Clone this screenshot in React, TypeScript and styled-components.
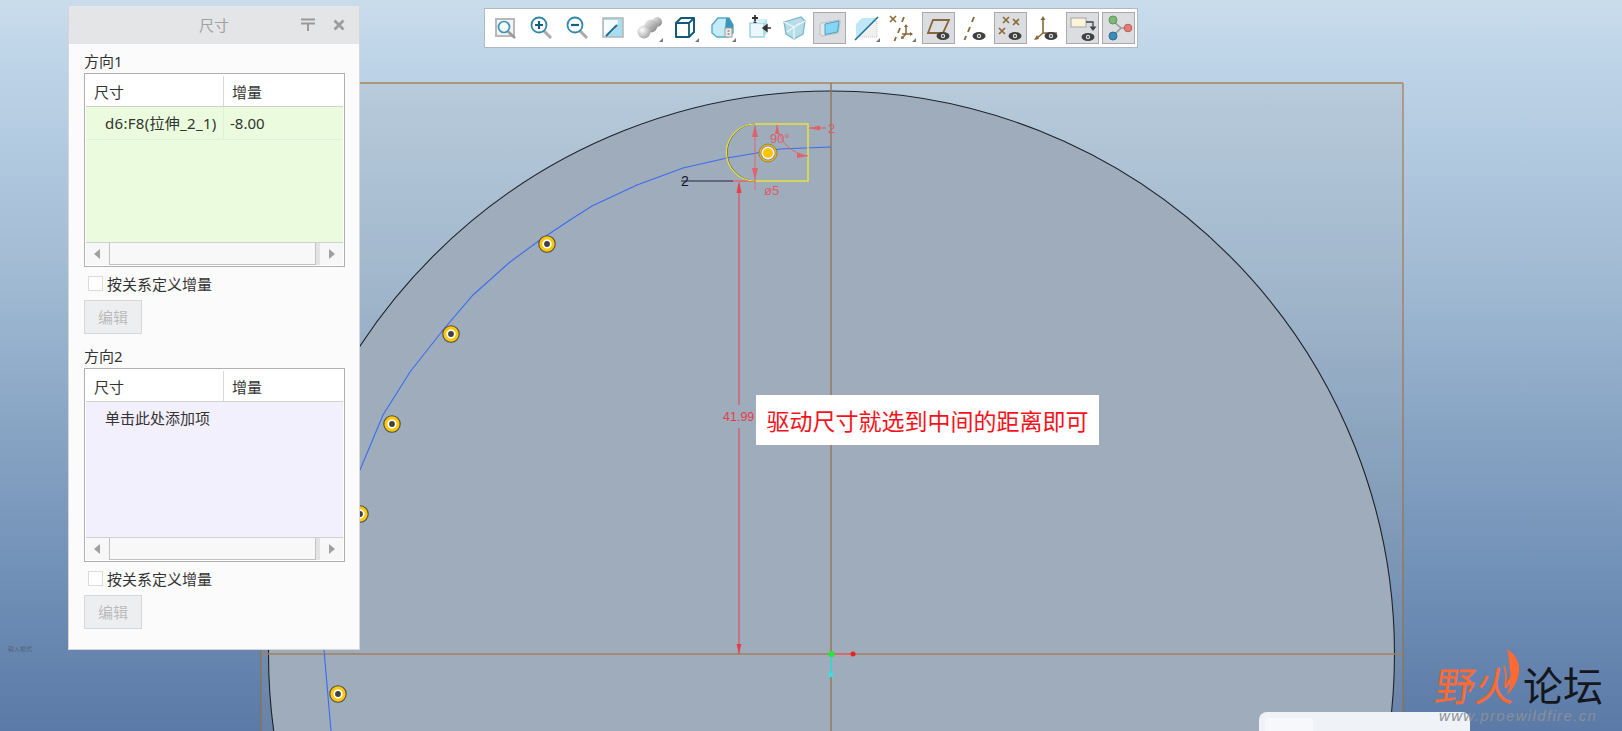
import React from "react";
import styled, { createGlobalStyle } from "styled-components";

const Global = createGlobalStyle`
  html, body { margin: 0; padding: 0; width: 1622px; height: 731px; overflow: hidden; }
  body { font-family: "Noto Sans", "Noto Sans CJK SC", sans-serif; }
`;

const Stage = styled.div`
  position: relative;
  width: 1622px;
  height: 731px;
  overflow: hidden;
  background: linear-gradient(180deg, #c8dcec 0%, #bcd3e7 10%, #a4bdd5 35%, #86a3c3 60%, #6a8ab3 85%, #5b7aa7 100%);
`;

const Drawing = styled.svg`
  position: absolute;
  left: 0;
  top: 0;
`;

const DimText = styled.text<{ $c?: string; $s?: number }>`
  font-family: "Liberation Sans", "Noto Sans CJK SC", sans-serif;
  font-size: ${(p) => p.$s ?? 12}px;
  fill: ${(p) => p.$c ?? "#d9606a"};
`;

const ModeHint = styled.div`
  position: absolute;
  left: 8px;
  top: 645px;
  font-size: 6px;
  line-height: 8px;
  color: #565f70;
  font-family: "Noto Sans CJK SC", sans-serif;
`;

/* ---------- toolbar ---------- */
const Toolbar = styled.div`
  position: absolute;
  left: 484px;
  top: 8px;
  width: 654px;
  height: 40px;
  box-sizing: border-box;
  background: #fff;
  border: 1px solid #aebbc6;
  padding: 0 0 0 3.5px;
  display: flex;
  align-items: center;
  gap: 3.1px;
`;

const ToolButton = styled.div<{ $on?: boolean }>`
  width: 33px;
  height: 32px;
  box-sizing: border-box;
  display: flex;
  align-items: center;
  justify-content: center;
  background: ${(p) => (p.$on ? "#dcdde0" : "transparent")};
  border: 1px solid ${(p) => (p.$on ? "#aaaaaa" : "transparent")};
`;

const Corner = () => <polygon points="29,29 29,25 25,29" fill="#777" />;
const Eye = ({ x, y }: { x: number; y: number }) => (
  <g>
    <ellipse cx={x} cy={y} rx="6.5" ry="4" fill="#3f3f3f" />
    <circle cx={x} cy={y} r="2.2" fill="#ddd" />
    <circle cx={x} cy={y} r="1" fill="#333" />
  </g>
);
const Cross = ({ x, y }: { x: number; y: number }) => (
  <path d={`M${x - 3} ${y - 3}L${x + 3} ${y + 3}M${x + 3} ${y - 3}L${x - 3} ${y + 3}`} stroke="#8a6a35" strokeWidth="1.6" fill="none" />
);
const BROWN = "#86683a";

const icons: React.ReactNode[] = [
  <g key="1">
    <rect x="6" y="6" width="18" height="17" fill="#eef4f7" stroke="#b8b8b8" strokeWidth="2" />
    <circle cx="14" cy="14" r="5.5" fill="#f6fbfd" stroke="#3f93b3" strokeWidth="1.7" />
    <path d="M18 18.5L25 25" stroke="#9a9a9a" strokeWidth="2.6" />
  </g>,
  <g key="2">
    <path d="M18 18L25 25" stroke="#aaa" strokeWidth="3" />
    <circle cx="13" cy="12" r="7.5" fill="#fff" stroke="#2f88a7" strokeWidth="1.8" />
    <path d="M9 12H17M13 8V16" stroke="#14607e" strokeWidth="2.2" />
  </g>,
  <g key="3">
    <path d="M18 18L25 25" stroke="#aaa" strokeWidth="3" />
    <circle cx="13" cy="12" r="7.5" fill="#fff" stroke="#2f88a7" strokeWidth="1.8" />
    <path d="M9 12H17" stroke="#14607e" strokeWidth="2.2" />
  </g>,
  <g key="4">
    <rect x="5" y="5" width="20" height="19" fill="#a9dcee" stroke="#b5b5b5" strokeWidth="1.5" />
    <path d="M6 7H20C20 15 14 21 6 23Z" fill="#f7fbfc" />
    <path d="M8 23L19 12" stroke="#1c6f96" strokeWidth="2" />
  </g>,
  <g key="5">
    <defs>
      <radialGradient id="sph" cx="0.35" cy="0.35" r="0.8">
        <stop offset="0" stopColor="#ffffff" />
        <stop offset="1" stopColor="#9a9a9a" />
      </radialGradient>
      <linearGradient id="sph2" x1="0" y1="0" x2="1" y2="1">
        <stop offset="0" stopColor="#f4f4f4" />
        <stop offset="1" stopColor="#7d7d7d" />
      </linearGradient>
    </defs>
    <circle cx="23" cy="9" r="5" fill="url(#sph2)" />
    <circle cx="17" cy="13" r="6.5" fill="url(#sph2)" />
    <circle cx="10" cy="19" r="6.5" fill="url(#sph)" />
    <Corner />
  </g>,
  <g key="6">
    <path d="M6 10L11 5H24V19L19 24H6Z" fill="#fff" stroke="#14597a" strokeWidth="2" strokeLinejoin="round" />
    <path d="M6 10H19V24M19 10L24 5" fill="none" stroke="#14597a" strokeWidth="1.8" />
    <Corner />
  </g>,
  <g key="7">
    <path d="M5 12L11 5H22L26 12V20L21 24H10L5 20Z" fill="#c4ebf7" stroke="#5ba8c5" strokeWidth="1.4" />
    <path d="M19 5L22 5L26 12V16H18Z" fill="#3f94bb" />
    <rect x="18" y="15" width="7" height="9" fill="#ececec" stroke="#999" />
    <path d="M20.5 18H22.5M20.5 21H22.5" stroke="#555" strokeWidth="1.2" />
    <Corner />
  </g>,
  <g key="8">
    <rect x="7" y="10" width="14" height="14" fill="#eaf8fc" stroke="#9bd0e2" strokeWidth="1.4" />
    <path d="M7 10L11 6H24L21 10Z" fill="#d6f0f8" />
    <path d="M21 10L24 6V20L21 24Z" fill="#a9def0" />
    <path d="M15 5H9M12 2V8" stroke="#333" strokeWidth="1.8" />
    <path d="M12 8L10 10H14Z" fill="#333" />
    <path d="M28 15H23M20 15L24 12V18Z" stroke="#333" strokeWidth="1.4" fill="#333" />
  </g>,
  <g key="9">
    <path d="M5 9L22 4L26 8L24 21L15 26L7 21Z" fill="#b7dde9" stroke="#7fb6c9" strokeWidth="1.3" />
    <path d="M5 9L15 14L26 8M15 14V26M8 19L21 10" fill="none" stroke="#eef8fb" strokeWidth="1.2" />
  </g>,
  <g key="10">
    <path d="M7 10L24 7C25.5 7 25 9 25 10L23 20L8 23C6 23 5 22 5 20V12C5 11 6 10 7 10Z" fill="#e4e7e9" stroke="#b9bdc1" strokeWidth="1" />
    <path d="M10 11L24 8L22.5 19L10 21.5Z" fill="#85d6f2" stroke="#3f9cc2" strokeWidth="0.9" />
  </g>,
  <g key="11">
    <path d="M8 8H26V24H8Z" fill="#f0f0f0" stroke="#c9c9c9" strokeDasharray="1 1" />
    <path d="M5 11L11 5H25L5 25Z" fill="#bfe8f6" />
    <path d="M4 27L27 4" stroke="#1c6f96" strokeWidth="1.600" />
    <Corner />
  </g>,
  <g key="12">
    <Cross x={6} y={6} />
    <path d="M17 4L15 9M13 15L11 20M9 24L7.500 28" stroke={BROWN} strokeWidth="1.8" />
    <path d="M19 13V21H15M19 21H25M19 21L15 25" stroke={BROWN} strokeWidth="1.5" fill="none" />
    <path d="M19 11L17 14H21ZM26 21L23 19V23ZM14 26L14.500 22.500L17.500 25.500Z" fill={BROWN} />
    <Corner />
  </g>,
  <g key="13">
    <path d="M10 7H26L20 20H5Z" fill="none" stroke={BROWN} strokeWidth="1.8" />
    <Eye x={20} y={23} />
  </g>,
  <g key="14">
    <path d="M15 4L13 9M11 14L9 19M7 23L5.500 27" stroke={BROWN} strokeWidth="1.9" />
    <Eye x={20} y={23} />
  </g>,
  <g key="15">
    <Cross x={11} y={7} />
    <Cross x={21} y={9} />
    <Cross x={7} y={18} />
    <Eye x={20} y={23} />
  </g>,
  <g key="16">
    <path d="M12 5V20H26M12 20L5 26" stroke={BROWN} strokeWidth="1.6" fill="none" />
    <path d="M12 3L9.500 7H14.500ZM6 22L3 27L8 26Z" fill={BROWN} />
    <Eye x={20} y={23} />
  </g>,
  <g key="17">
    <rect x="3" y="5" width="15" height="9" fill="#fbf4d9" stroke="#a5a5a5" />
    <path d="M18 9H25V14" stroke="#444" strokeWidth="1.3" fill="none" />
    <path d="M21.500 13.500H28.500L25 18Z" fill="#444" />
    <Eye x={20} y={24} />
  </g>,
  <g key="18">
    <path d="M9 8L17 15L9 23M17 15H24" stroke="#9a9a9a" strokeWidth="1.6" fill="none" />
    <circle cx="9" cy="7" r="4" fill="#7fb679" stroke="#5d9658" />
    <circle cx="9" cy="23" r="4" fill="#3d8cb8" stroke="#2d7099" />
    <circle cx="24" cy="15" r="3.8" fill="#e57b74" stroke="#bd5a54" />
  </g>,
];
const activeTools = new Set([9, 12, 14, 16, 17]);

const ToolIcon = styled.svg`
  width: 30px;
  height: 30px;
  display: block;
  flex: none;
`;

/* ---------- dialog ---------- */
const Dialog = styled.div`
  position: absolute;
  left: 68px;
  top: 6px;
  width: 292px;
  height: 644px;
  box-sizing: border-box;
  background: #fbfbfb;
  border: 1px solid #d4d6d8;
  border-top: none;
  color: #333;
  font-size: 15px;
`;

const TitleBar = styled.div`
  height: 38px;
  background: #e4e5e7;
  display: flex;
  align-items: center;
  justify-content: center;
  padding-bottom: 2px;
  box-sizing: border-box;
  position: relative;
  color: #a2a2a2;
`;

const TitleActions = styled.div`
  position: absolute;
  right: 14px;
  top: 12px;
  display: flex;
  align-items: center;
  gap: 17px;
`;

const Body = styled.div`
  padding: 8px 14px 0 15px;
`;

const GroupLabel = styled.div<{ $second?: boolean }>`
  height: 20px;
  line-height: 18px;
  margin-top: ${(p) => (p.$second ? "13px" : "0")};
  margin-bottom: 1px;
`;

const Table = styled.div`
  box-sizing: border-box;
  height: 194px;
  border: 1px solid #b0b0b0;
  padding: 1px;
  display: flex;
  flex-direction: column;
  background: #fff;
`;

const HeadRow = styled.div`
  height: 32px;
  flex: none;
  box-sizing: border-box;
  display: grid;
  grid-template-columns: 137px 1fr;
  border-bottom: 1px solid #d0d0d0;
`;

const HeadCell = styled.div<{ $last?: boolean }>`
  display: flex;
  align-items: center;
  padding-left: 8px;
  border-left: ${(p) => (p.$last ? "1px solid #d8d8d8" : "none")};
  margin: 1px 0 0;
`;

const TableBody = styled.div<{ $bg: string }>`
  flex: 1;
  background: ${(p) => p.$bg};
`;

const DataRow = styled.div`
  height: 33px;
  box-sizing: border-box;
  display: grid;
  grid-template-columns: 137px 1fr;
  border-bottom: 1px solid #e0efd6;
`;

const DataCell = styled.div<{ $last?: boolean }>`
  display: flex;
  align-items: center;
  padding-left: ${(p) => (p.$last ? "6px" : "19px")};
  padding-bottom: 1px;
  border-left: ${(p) => (p.$last ? "1px solid #e0efd6" : "none")};
  white-space: nowrap;
  letter-spacing: ${(p) => (p.$last ? "0" : "0.3px")};
`;

const AddHint = styled.div`
  height: 33px;
  display: flex;
  align-items: center;
  padding-left: 19px;
  padding-bottom: 2px;
  box-sizing: border-box;
`;

const ScrollBar = styled.div`
  flex: none;
  height: 23px;
  display: flex;
  background: #e4e4e4;
  gap: 0;
  border-top: 1px solid #d0d0d0;
  box-sizing: border-box;
`;

const ScrollArrow = styled.div`
  width: 23px;
  flex: none;
  display: flex;
  align-items: center;
  justify-content: center;
  background: #f7f7f7;
  color: #9a9a9a;
`;

const ScrollTrack = styled.div`
  flex: 1;
  background: #f8f8f8;
  border: 1px solid #c2c2c2;
  border-top: none;
  margin-right: 4px;
`;

const CheckRow = styled.label`
  display: flex;
  align-items: center;
  margin: 9px 0 0 4px;
  height: 15px;
  gap: 4px;
`;

const CheckBox = styled.span`
  width: 15px;
  height: 15px;
  box-sizing: border-box;
  background: #fff;
  border: 1px solid #dcdcdc;
  flex: none;
`;

const EditButton = styled.div`
  margin-top: 9px;
  width: 58px;
  height: 34px;
  box-sizing: border-box;
  display: flex;
  align-items: center;
  justify-content: center;
  padding-bottom: 2px;
  background: #edeef0;
  border: 1px solid #d8d8d8;
  color: #bbbbbb;
`;

const Triangle = ({ dir }: { dir: "l" | "r" }) => (
  <svg width="7" height="10" viewBox="0 0 7 10">
    <polygon points={dir === "l" ? "6,0 6,10 0,5" : "1,0 1,10 7,5"} fill="#a0a0a0" />
  </svg>
);

/* ---------- overlays ---------- */
const Note = styled.div`
  position: absolute;
  left: 756px;
  top: 395px;
  width: 343px;
  height: 50px;
  box-sizing: border-box;
  background: #fff;
  display: flex;
  align-items: center;
  justify-content: center;
  color: #f5131b;
  font-size: 23px;
  font-family: "Noto Sans CJK SC", sans-serif;
  white-space: nowrap;
`;

const BottomCard = styled.div`
  position: absolute;
  left: 1259px;
  top: 712px;
  width: 211px;
  height: 40px;
  background: #eff2f7;
  border-radius: 8px 8px 0 0;
  padding: 6px;
  box-sizing: border-box;
`;

const CardTab = styled.div`
  width: 48px;
  height: 30px;
  background: #f6f8fb;
  border-radius: 4px;
`;

const Watermark = styled.div`
  position: absolute;
  left: 1436px;
  top: 646px;
  width: 180px;
  height: 85px;
`;

const BrandLine = styled.div`
  display: flex;
  align-items: center;
  height: 62px;
  padding-top: 14px;
  box-sizing: border-box;
  font-size: 40px;
  line-height: 40px;
  font-family: "Noto Sans CJK SC", sans-serif;
  white-space: nowrap;
`;

const BrandHot = styled.span`
  color: #ff6a33;
  display: inline-block;
  transform: skewX(-8deg);
  width: 87px;
`;

const BrandCold = styled.span`
  color: #15171c;
`;

const BrandFlame = styled.svg`
  position: absolute;
  left: 67px;
  top: 2px;
`;

const BrandUrl = styled.div`
  margin-top: -1px;
  padding-left: 3px;
  font-family: "Liberation Sans", sans-serif;
  font-style: italic;
  font-size: 15px;
  line-height: 18px;
  letter-spacing: 1.35px;
  color: #8a8f99;
  white-space: nowrap;
`;

/* ---------- data ---------- */
const blueCurve = "324,650 331,731";
const blueTop =
  "360,470 383,415 410,372 443,330 473,295 510,262 540,240 570,220 592,206 637,185 683,168 727,158 757,153 780,149 831,147";

const holes: [number, number][] = [
  [547, 244],
  [451, 334],
  [392, 424],
  [360, 514],
  [338, 694],
];

const GroupTable = ({ children, bg }: { children?: React.ReactNode; bg: string }) => (
  <Table>
    <HeadRow>
      <HeadCell>尺寸</HeadCell>
      <HeadCell $last>增量</HeadCell>
    </HeadRow>
    <TableBody $bg={bg}>{children}</TableBody>
    <ScrollBar>
      <ScrollArrow>
        <Triangle dir="l" />
      </ScrollArrow>
      <ScrollTrack />
      <ScrollArrow>
        <Triangle dir="r" />
      </ScrollArrow>
    </ScrollBar>
  </Table>
);

const Group = ({ label, second, bg, children }: { label: string; second?: boolean; bg: string; children?: React.ReactNode }) => (
  <>
    <GroupLabel $second={second}>{label}</GroupLabel>
    <GroupTable bg={bg}>{children}</GroupTable>
    <CheckRow>
      <CheckBox />
      按关系定义增量
    </CheckRow>
    <EditButton>编辑</EditButton>
  </>
);

export default function App() {
  const RED = "#e3404a";
  return (
    <Stage>
      <Global />
      <Drawing width="1622" height="731" viewBox="0 0 1622 731">
        <rect x="261" y="83" width="1142" height="660" fill="rgba(165,170,170,0.18)" />
        <circle cx="831.500" cy="654" r="563" fill="#9facbb" stroke="#1f2228" strokeWidth="1.100" />
        <path d="M261 83V731M1403 83V731" fill="none" stroke="#9d6a3a" strokeWidth="1" />
        <path d="M261 83H1403" fill="none" stroke="#a98657" strokeWidth="1.500" />
        <path d="M261 654H1403" stroke="#a08060" strokeWidth="1.400" />
        <path d="M831 83V731" stroke="#94714c" strokeWidth="1.300" />

        <polyline points={blueCurve} fill="none" stroke="#3b6cf2" strokeWidth="1.100" />
        <polyline points={blueTop} fill="none" stroke="#3b6cf2" strokeWidth="1.100" />

        {/* vertical driving dimension */}
        <path d="M739 184V405M739 428V654" stroke={RED} strokeWidth="1" />
        <path d="M739 181L736.500 193H741.500Z" fill={RED} />
        <path d="M739 654L736.500 644H741.500Z" fill={RED} />
        <DimText x="723" y="421" $c={RED} $s={12.500}>41.99</DimText>

        {/* slot sketch */}
        <path d="M733 181H755" stroke="#dc6870" strokeWidth="1.500" />
        <path d="M681 181H733" stroke="#4d5068" strokeWidth="1.500" />
        <DimText x="681" y="186" $c="#11132b" $s={14}>2</DimText>
        <path d="M755 124A28.500 28.500 0 0 0 755 181" fill="none" stroke="#555" strokeWidth="1.200" transform="translate(0.600 0)" />
        <path d="M755 124A28.500 28.500 0 0 0 755 181" fill="none" stroke="#efe82a" strokeWidth="1.200" />
        <path d="M755 124H808V181H755" fill="none" stroke="#e8e23c" strokeWidth="1.500" />
        <path d="M755 126V190" stroke="#dc6870" strokeWidth="1" />
        <path d="M755 125L752 137H758Z" fill="#e0636c" />
        <path d="M755 180L752 168H758Z" fill="#e0636c" />
        <path d="M777 125C779 140 788 152 808 156" fill="none" stroke="#dc6870" strokeWidth="1" />
        <path d="M777 124L775 134H779Z" fill="#e0636c" />
        <path d="M808 156L797 153V158Z" fill="#e0636c" />
        <DimText x="770" y="143" $s={13}>90°</DimText>
        <path d="M809 128H826" stroke="#dc6870" strokeWidth="1.200" />
        <path d="M809 128L820 125.500V130.500Z" fill="#e0636c" />
        <DimText x="828" y="133" $s={13}>2</DimText>
        <DimText x="764" y="195" $s={13}>ø5</DimText>

        {/* big slot pin */}
        <circle cx="768" cy="153" r="9" fill="#f3b800" stroke="#7a6a30" strokeWidth="0.600" />
        <circle cx="768" cy="153" r="7.500" fill="#8f8f93" />
        <circle cx="768" cy="153" r="6.500" fill="#f4f4f4" />
        <circle cx="768" cy="153" r="5" fill="#ffc400" />

        {holes.map(([x, y]) => (
          <g key={x}>
            <circle cx={x} cy={y} r="8.200" fill="#ffc800" stroke="#4c4c4c" strokeWidth="1.100" />
            <circle cx={x} cy={y} r="4.700" fill="#fff" />
            <circle cx={x} cy={y} r="2.900" fill="#3f3f44" />
          </g>
        ))}

        {/* origin */}
        <path d="M831 654H853" stroke="#e8606a" strokeWidth="1.500" />
        <path d="M831 654V675" stroke="#2fe6ee" strokeWidth="1.500" />
        <circle cx="853" cy="654" r="2.500" fill="#ee2020" />
        <rect x="829" y="673" width="4" height="4" fill="#22e8f0" />
        <circle cx="831.500" cy="654" r="3" fill="#22e83a" />
      </Drawing>

      <ModeHint>输入模式</ModeHint>

      <Toolbar>
        {icons.map((icon, i) => (
          <ToolButton key={i} $on={activeTools.has(i)}>
            <ToolIcon viewBox="0 0 30 30">{icon}</ToolIcon>
          </ToolButton>
        ))}
      </Toolbar>

      <Dialog>
        <TitleBar>
          尺寸
          <TitleActions>
            <svg width="16" height="14" viewBox="0 0 16 14">
              <path d="M1 1.500H15M1 5.500H15M8 6V13" stroke="#9a9a9a" strokeWidth="2" fill="none" />
            </svg>
            <svg width="12" height="12" viewBox="0 0 12 12">
              <path d="M1.500 1.500L10.500 10.500M10.500 1.500L1.500 10.500" stroke="#9c9c9c" strokeWidth="2.800" />
            </svg>
          </TitleActions>
        </TitleBar>
        <Body>
          <Group label="方向1" bg="#eafcdd">
            <DataRow>
              <DataCell>d6:F8(拉伸_2_1)</DataCell>
              <DataCell $last>-8.00</DataCell>
            </DataRow>
          </Group>
          <Group label="方向2" second bg="#f3f0fe">
            <AddHint>单击此处添加项</AddHint>
          </Group>
        </Body>
      </Dialog>

      <Note>驱动尺寸就选到中间的距离即可</Note>

      <BottomCard>
        <CardTab />
      </BottomCard>

      <Watermark>
        <BrandLine>
          <BrandHot>野火</BrandHot>
          <BrandCold>论坛</BrandCold>
        </BrandLine>
        <BrandFlame width="20" height="50" viewBox="0 0 20 50">
          <path d="M4 1C12 6 17 14 16 24C15 33 10 41 4 47C7 38 9 31 7 22C6 14 6 8 4 1Z" fill="#ff6a33" />
          <path d="M1 18C3 24 4 30 2 37" fill="none" stroke="#ff6a33" strokeWidth="1.600" />
        </BrandFlame>
        <BrandUrl>www.proewildfire.cn</BrandUrl>
      </Watermark>
    </Stage>
  );
}
